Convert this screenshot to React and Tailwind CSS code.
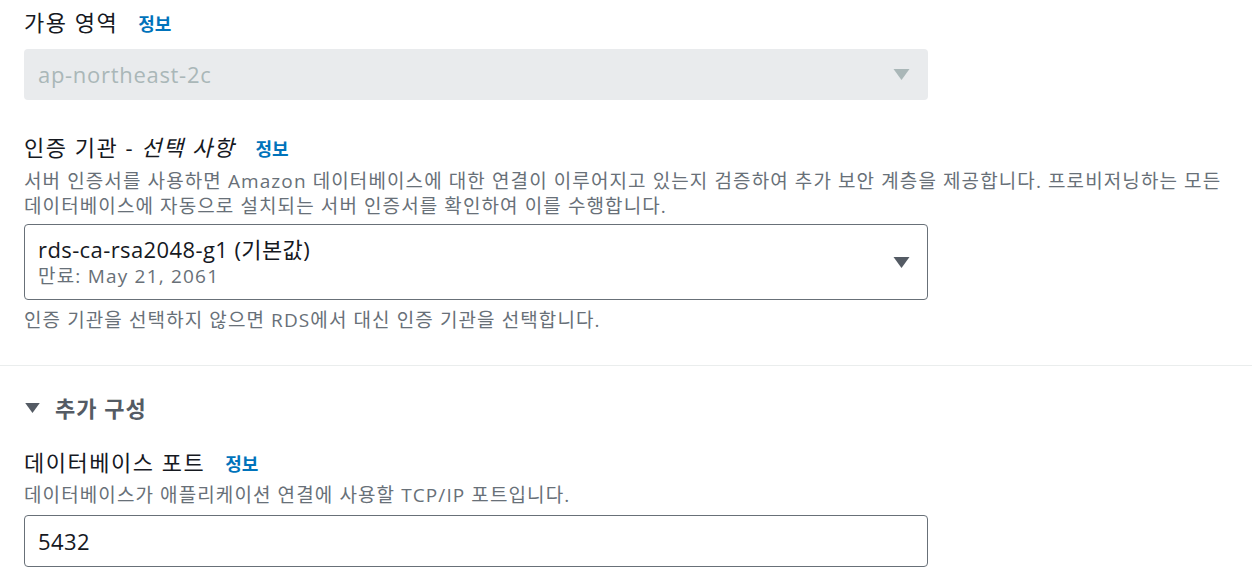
import React from "react";

const font = { fontFamily: '"Open Sans", "Noto Sans CJK KR", sans-serif' };

const Caret = ({ className }) => (
  <svg viewBox="0 0 16 11" className={className} fill="currentColor">
    <path d="M0 0h16L8 11z" />
  </svg>
);

const Label = ({ children }) => (
  <div className="flex items-baseline gap-[20px] text-[22px] leading-[30px] tracking-[1.5px] text-[#16191f]">
    <span>{children}</span>
    <a className="text-[18px] font-bold tracking-normal text-[#0073bb]">정보</a>
  </div>
);

const Hint = ({ children }) => (
  <p className="text-[19px] leading-[25px] tracking-[1.1px] whitespace-nowrap text-[#687078]">{children}</p>
);

export default function App() {
  return (
    <div className="w-[1252px] h-[567px] overflow-hidden bg-white" style={font}>
      <div className="px-6 pt-[7px]">
        <Label>가용 영역</Label>
        <div className="mt-[10px] w-[904px] h-[51px] rounded-[4px] bg-[#e9ebed] flex items-center justify-between pl-[14px] pr-[18px]">
          <span className="text-[22px] tracking-[0.7px] text-[#aab7b8]">ap-northeast-2c</span>
          <Caret className="w-[17px] h-[11px] text-[#aab7b8]" />
        </div>

        <div className="mt-[32px]">
          <Label>
            인증 기관 - <i>선택 사항</i>
          </Label>
          <div className="mt-[5px]">
            <Hint>
              서버 인증서를 사용하면 Amazon 데이터베이스에 대한 연결이 이루어지고 있는지 검증하여 추가 보안 계층을 제공합니다. 프로비저닝하는 모든
            </Hint>
            <Hint>데이터베이스에 자동으로 설치되는 서버 인증서를 확인하여 이를 수행합니다.</Hint>
          </div>
          <div className="mt-[5px] w-[904px] h-[76px] rounded-[4px] border border-[#687078] flex items-center justify-between pl-[13px] pr-[17px]">
            <div>
              <div className="text-[22px] leading-[28px] tracking-[0.4px] text-[#16191f]">rds-ca-rsa2048-g1 (기본값)</div>
              <div className="text-[19px] leading-[26px] tracking-[1.2px] text-[#687078]">만료: May 21, 2061</div>
            </div>
            <Caret className="w-[17px] h-[11px] text-[#545b64]" />
          </div>
          <div className="mt-[8px]">
            <Hint>인증 기관을 선택하지 않으면 RDS에서 대신 인증 기관을 선택합니다.</Hint>
          </div>
        </div>
      </div>

      <div className="mt-[32px] border-t border-[#eaeded]" />

      <div className="px-6 pt-[27px]">
        <div className="flex items-center gap-[15px] text-[22px] leading-[30px] font-bold tracking-[1px] text-[#545b64]">
          <Caret className="w-[15px] h-[10px] ml-[1px]" />
          <span>추가 구성</span>
        </div>
        <div className="mt-[24px]">
          <Label>데이터베이스 포트</Label>
          <div className="mt-[4px]">
            <Hint>데이터베이스가 애플리케이션 연결에 사용할 TCP/IP 포트입니다.</Hint>
          </div>
          <div className="mt-[7px] w-[904px] h-[52px] rounded-[4px] border border-[#687078] flex items-center pl-[13px]">
            <span className="text-[22px] tracking-[0.4px] text-[#16191f]">5432</span>
          </div>
        </div>
      </div>
    </div>
  );
}
